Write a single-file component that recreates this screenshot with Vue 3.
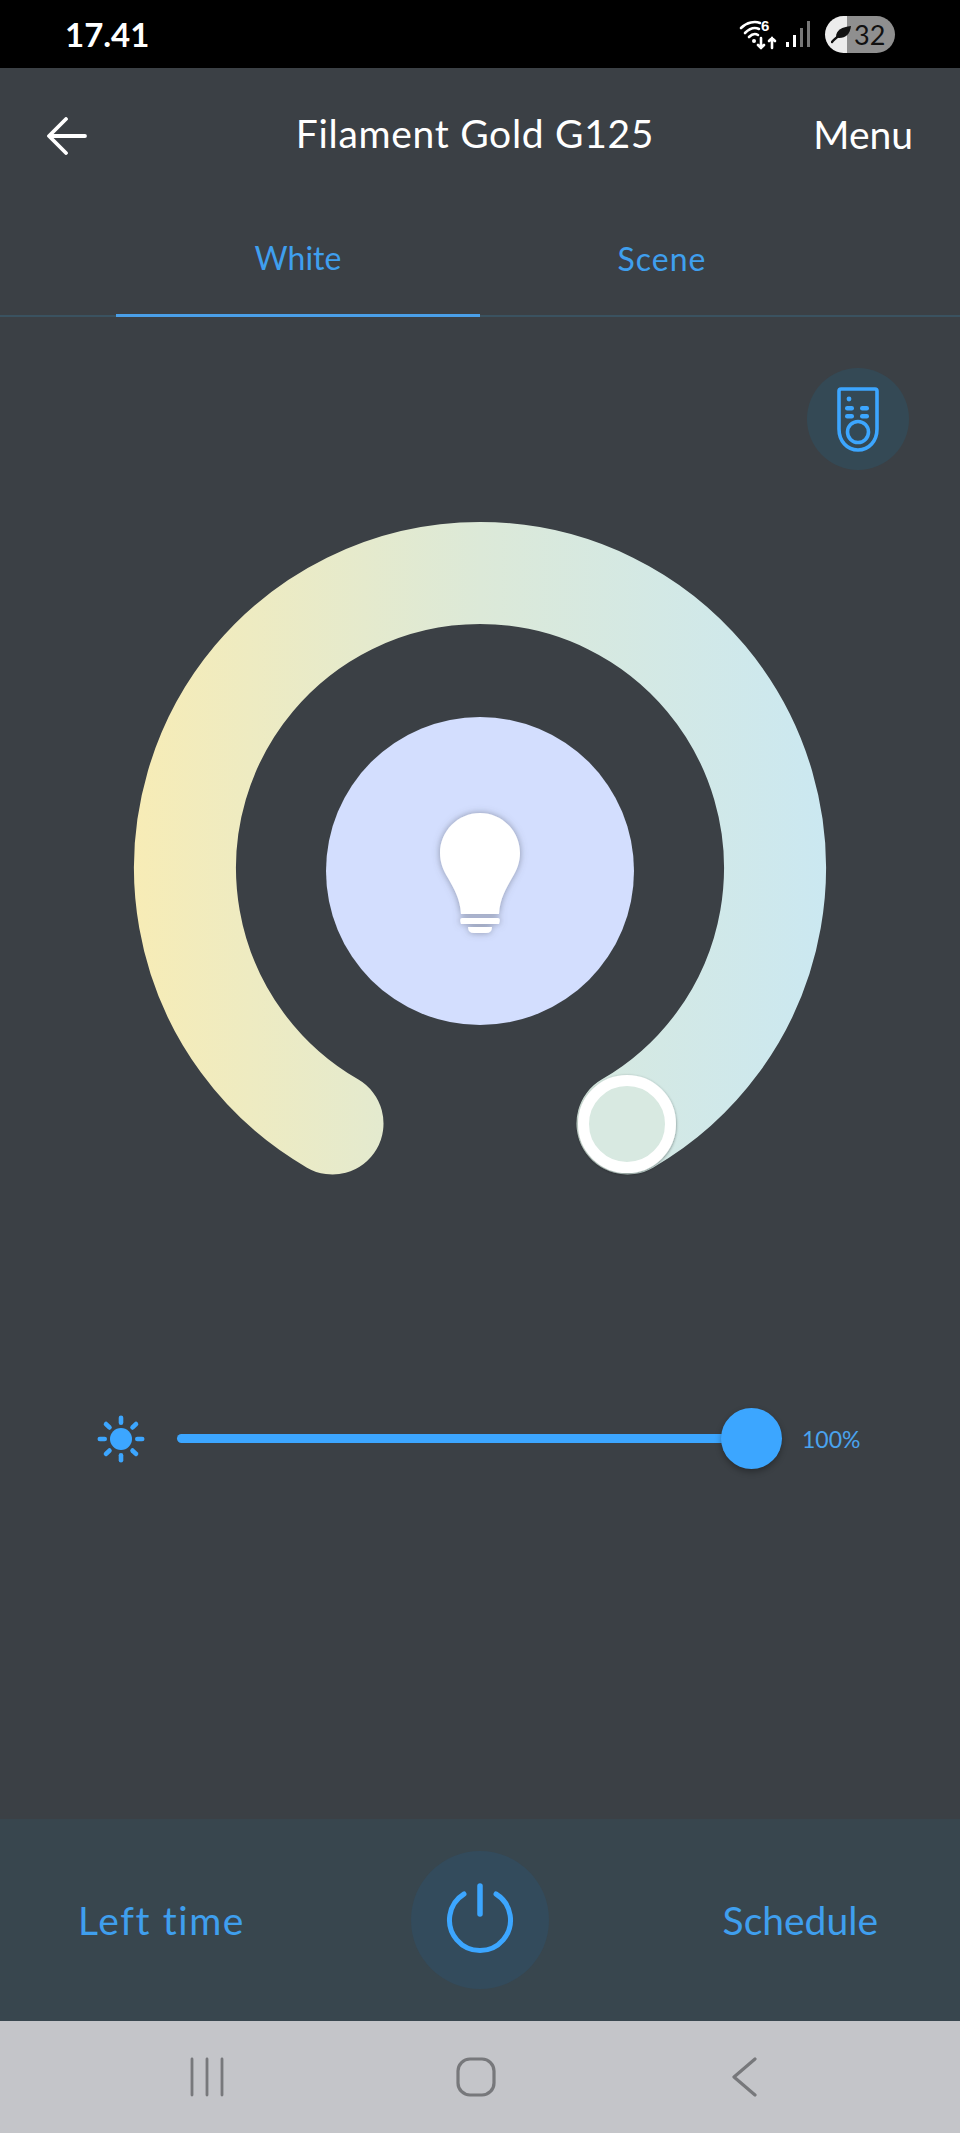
<script setup>
const rays = [0, 45, 90, 135, 180, 225, 270, 315]
</script>

<template>
  <div class="screen">
    <div class="status">
      <span class="time">17.41</span>
      <div class="status-icons">
        <svg class="wifi" width="40" height="34" viewBox="0 0 40 34">
          <g fill="none" stroke="#fff" stroke-width="2.6" stroke-linecap="round">
            <path d="M2 11 C8 5 16 4 21 6" />
            <path d="M6 16 C11 11 16 10 20 12" />
            <path d="M10 20 C13 17 16 16 19 18" />
            <path d="M22 21 V31 M19 28 L22 31 L25 28" />
            <path d="M33 31 V21 M30 24 L33 21 L36 24" />
          </g>
          <circle cx="15" cy="24" r="2" fill="#fff" />
          <text x="22" y="14" class="six">6</text>
        </svg>
        <svg class="signal" width="26" height="28" viewBox="0 0 26 28">
          <rect x="1" y="22" width="3" height="5" fill="#fff" />
          <rect x="8" y="15" width="3" height="12" fill="#fff" />
          <rect x="15" y="8" width="3" height="19" fill="#777" />
          <rect x="22" y="1" width="3" height="26" fill="#777" />
        </svg>
        <div class="battery">
          <svg class="leaf" width="22" height="20" viewBox="0 0 22 20">
            <path d="M5 13 C5 6 11 3 20 2 C19 10 15 14 8 14 Z" fill="#111" />
            <path d="M1 18 C4 14 8 12 12 9" fill="none" stroke="#111" stroke-width="2.4" stroke-linecap="round" />
          </svg>
          <span class="level">32</span>
        </div>
      </div>
    </div>

    <header class="header">
      <svg class="back" width="40" height="38" viewBox="0 0 40 38">
        <path d="M38 19 H3 M19 2 L2 19 L19 36" fill="none" stroke="#fff" stroke-width="3.8" stroke-linecap="round" stroke-linejoin="round" />
      </svg>
      <h1 class="title">Filament Gold G125</h1>
      <span class="menu">Menu</span>
    </header>

    <nav class="tabs">
      <div class="tab active">White</div>
      <div class="tab scene">Scene</div>
    </nav>

    <main class="main">
      <div class="remote-row">
        <div class="remote">
          <svg width="44" height="66" viewBox="0 0 44 66">
            <path d="M3 5 Q3 3 5 3 H39 Q41 3 41 5 V43 C41 55 33 64 22 64 C11 64 3 55 3 43 Z" fill="none" stroke="#3ca6ff" stroke-width="3.6" />
            <circle cx="22" cy="46" r="10.5" fill="none" stroke="#3ca6ff" stroke-width="3.6" />
            <circle cx="13" cy="13" r="2.4" fill="#3ca6ff" />
            <rect x="9" y="20" width="9" height="4.4" rx="2.2" fill="#3ca6ff" />
            <rect x="24" y="20" width="9" height="4.4" rx="2.2" fill="#3ca6ff" />
            <rect x="9" y="28" width="9" height="4.4" rx="2.2" fill="#3ca6ff" />
            <rect x="24" y="28" width="9" height="4.4" rx="2.2" fill="#3ca6ff" />
          </svg>
        </div>
      </div>

      <svg class="dial" width="700" height="700" viewBox="0 0 700 700">
        <defs>
          <linearGradient id="ringGrad" gradientUnits="userSpaceOnUse" x1="4" y1="0" x2="696" y2="0">
            <stop offset="0" stop-color="#f7ecb6" />
            <stop offset="0.5" stop-color="#dce9d8" />
            <stop offset="1" stop-color="#cbe8f1" />
          </linearGradient>
          <filter id="bulbShadow" x="-30%" y="-30%" width="160%" height="160%">
            <feDropShadow dx="0" dy="0" stdDeviation="3.5" flood-color="#5a6070" flood-opacity="0.6" />
          </filter>
          <filter id="knobShadow" x="-20%" y="-20%" width="140%" height="140%">
            <feDropShadow dx="0" dy="1" stdDeviation="1.8" flood-color="#000" flood-opacity="0.45" />
          </filter>
        </defs>
        <path d="M 202.5 605.5 A 295 295 0 1 1 497.5 605.5" fill="none" stroke="url(#ringGrad)" stroke-width="102" stroke-linecap="round" />
        <circle cx="350" cy="353" r="154" fill="#d3defe" />
        <g filter="url(#bulbShadow)" fill="#fff" transform="translate(350 295)">
          <path d="M-19 101 C-20 85 -26 76 -32 65 C-37 57 -40 49 -40 40 C-40 18 -22 0 0 0 C22 0 40 18 40 40 C40 49 37 57 32 65 C26 76 20 85 19 101 Z" />
          <path d="M-18 105 H18 Q21 105 19 111 H-19 Q-21 105 -18 105 Z" />
          <path d="M-12 114 H12 Q12 120 6 120 H-6 Q-12 120 -12 114 Z" />
        </g>
        <g filter="url(#knobShadow)">
          <circle cx="497" cy="606" r="43.5" fill="#d8e9e1" stroke="#fff" stroke-width="11" />
        </g>
      </svg>

      <div class="slider-row">
        <svg class="sun" width="48" height="48" viewBox="0 0 48 48">
          <circle cx="24" cy="24" r="11" fill="#3ca6ff" />
          <rect v-for="r in rays" :key="r" x="21.7" y="0.5" width="4.6" height="9.5" rx="2.3" fill="#3ca6ff" :transform="`rotate(${r} 24 24)`" />
        </svg>
        <div class="track">
          <div class="thumb"></div>
        </div>
        <span class="pct">100%</span>
      </div>
    </main>

    <footer class="bottom">
      <span class="action left-time">Left time</span>
      <div class="power">
        <svg width="76" height="78" viewBox="0 0 76 78">
          <path d="M22 13 A 30.5 30.5 0 1 0 54 13" fill="none" stroke="#3ca6ff" stroke-width="5" stroke-linecap="round" />
          <path d="M38 5 V33" fill="none" stroke="#3ca6ff" stroke-width="5.5" stroke-linecap="round" />
        </svg>
      </div>
      <span class="action schedule">Schedule</span>
    </footer>

    <div class="sysnav">
      <svg width="36" height="40" viewBox="0 0 36 40">
        <path d="M3 2 V38 M18 2 V38 M33 2 V38" stroke="#77787b" stroke-width="2.8" stroke-linecap="round" />
      </svg>
      <svg class="nav-home" width="40" height="40" viewBox="0 0 40 40">
        <rect x="2" y="2" width="36" height="36" rx="12" fill="none" stroke="#77787b" stroke-width="3.2" />
      </svg>
      <svg class="nav-back" width="26" height="40" viewBox="0 0 26 40">
        <path d="M24 2 L3 20 L24 38" fill="none" stroke="#77787b" stroke-width="3.2" stroke-linecap="round" stroke-linejoin="round" />
      </svg>
    </div>
  </div>
</template>

<style>
html, body { margin: 0; padding: 0; }
</style>

<style scoped>
.screen {
  width: 960px;
  height: 2133px;
  display: flex;
  flex-direction: column;
  background: #3b4045;
  font-family: "Lato", "Open Sans", sans-serif;
  overflow: hidden;
}
.status {
  height: 68px;
  flex: none;
  background: #000;
  display: flex;
  align-items: center;
  justify-content: space-between;
  padding: 0 65px;
  box-sizing: border-box;
}
.time { color: #fff; font-size: 33px; font-weight: 700; line-height: 1; }
.status-icons { display: flex; align-items: center; gap: 6px; }
.six { font-size: 15px; font-weight: 700; fill: #fff; font-family: "Liberation Sans", sans-serif; }
.battery {
  width: 70px;
  height: 37px;
  margin-left: 8px;
  border-radius: 19px;
  background: linear-gradient(90deg, #ececec 0 22px, #8f8f8f 22px 100%);
  display: flex;
  align-items: center;
  box-sizing: border-box;
  padding-left: 6px;
  gap: 1px;
}
.level { font-size: 27px; color: #111; line-height: 1; }
.header {
  height: 136px;
  flex: none;
  display: flex;
  align-items: center;
  justify-content: space-between;
  padding: 0 47px;
  box-sizing: border-box;
  color: #fff;
  position: relative;
}
.title {
  margin: 0;
  font-size: 39px;
  font-weight: 400;
  color: #fff;
  line-height: 1;
  position: absolute;
  left: 0;
  right: 10px;
  top: 46px;
  text-align: center;
  letter-spacing: 0.7px;
}
.menu { font-size: 39px; padding-bottom: 4px; }
.tabs {
  height: 113px;
  flex: none;
  display: flex;
  padding: 0 116px;
  box-sizing: border-box;
  border-bottom: 2px solid #3a5260;
}
.tab {
  width: 364px;
  display: flex;
  align-items: center;
  justify-content: center;
  color: #3f9fee;
  font-size: 32px;
  padding-bottom: 4px;
  box-sizing: border-box;
  height: 113px;
}
.tab.scene { letter-spacing: 1px; }
.tab.active { border-bottom: 3px solid #4a9fe8; }
.main {
  flex: 1;
  display: flex;
  flex-direction: column;
}
.remote-row {
  display: flex;
  justify-content: flex-end;
  padding: 51px 51px 0 0;
}
.remote {
  width: 102px;
  height: 102px;
  border-radius: 50%;
  background: #344955;
  display: flex;
  align-items: center;
  justify-content: center;
}
.dial {
  display: block;
  margin: 48px auto 0;
  flex: none;
}
.slider-row {
  display: flex;
  align-items: center;
  margin-top: 190px;
  padding-left: 97px;
  height: 61px;
}
.sun { flex: none; }
.track {
  width: 575px;
  height: 9px;
  margin-left: 32px;
  border-radius: 5px;
  background: #3ca6ff;
  position: relative;
}
.thumb {
  position: absolute;
  right: -30px;
  top: -26px;
  width: 61px;
  height: 61px;
  border-radius: 50%;
  background: #3ca6ff;
  box-shadow: 0 3px 6px rgba(0, 0, 0, 0.3);
}
.pct { margin-left: 50px; color: #4aa3ee; font-size: 23px; }
.bottom {
  height: 202px;
  flex: none;
  background: #38464e;
  display: flex;
  align-items: center;
  justify-content: space-between;
  padding: 0 82px 0 78px;
  box-sizing: border-box;
  position: relative;
}
.action { color: #3f9fee; font-size: 39px; }
.left-time { letter-spacing: 1.6px; }
.power {
  position: absolute;
  left: 411px;
  top: 32px;
  width: 138px;
  height: 138px;
  border-radius: 50%;
  background: #334b5c;
  display: flex;
  align-items: center;
  justify-content: center;
}
.sysnav {
  height: 112px;
  flex: none;
  background: #c4c5c9;
  display: flex;
  align-items: center;
  padding-left: 189px;
  box-sizing: border-box;
}
.nav-home { margin-left: 231px; }
.nav-back { margin-left: 235px; }
</style>
